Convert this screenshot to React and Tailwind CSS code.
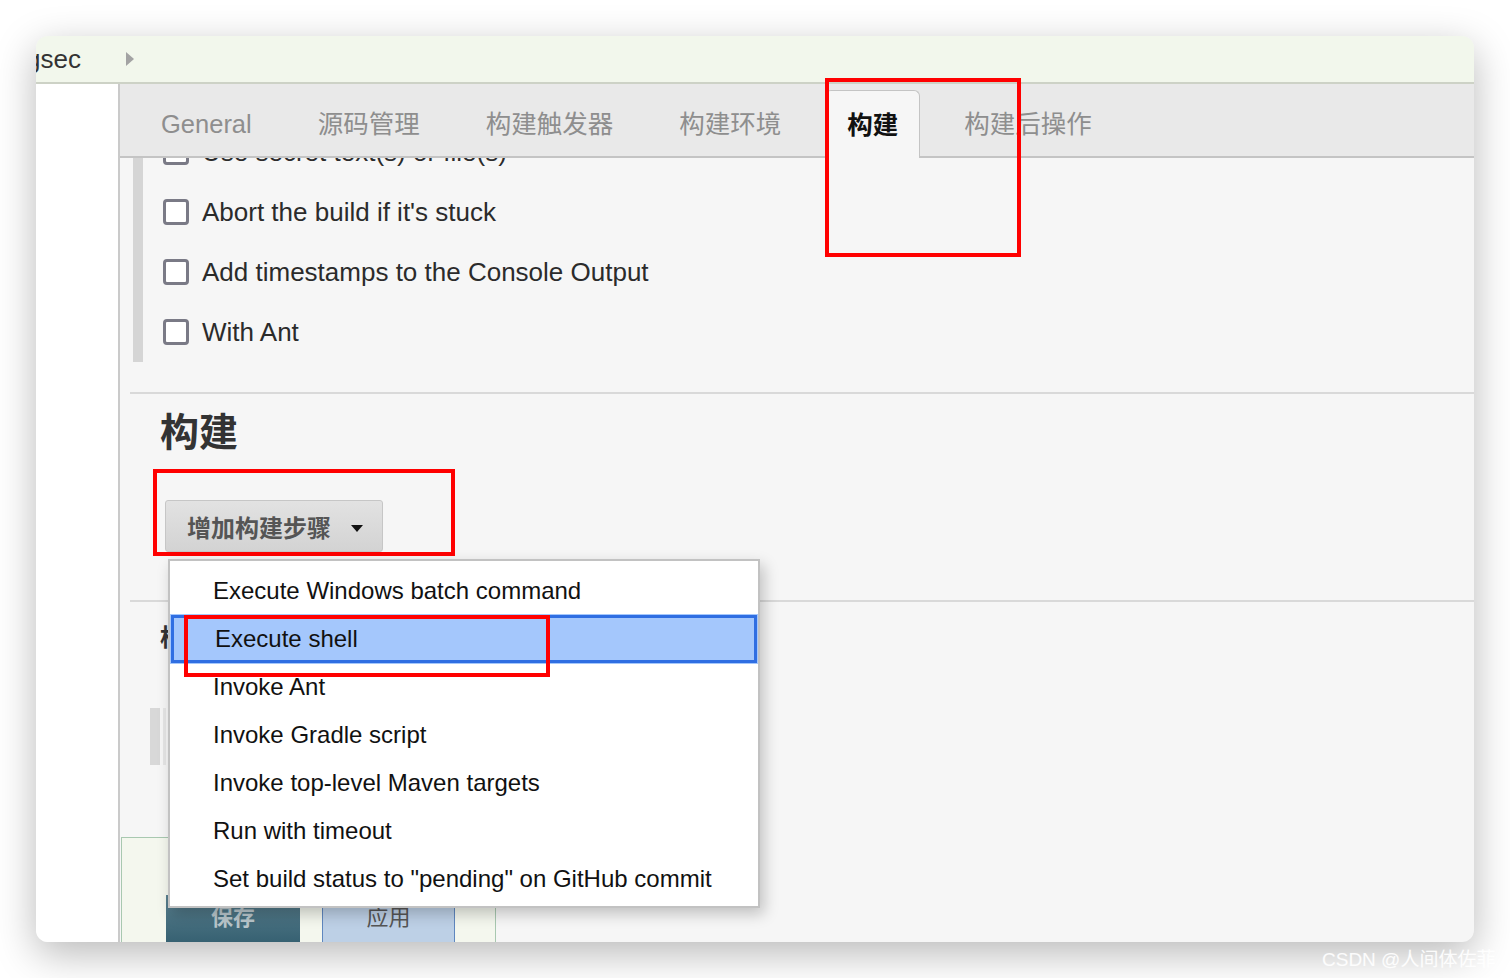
import React from 'react';

const tabs = ['General', '源码管理', '构建触发器', '构建环境', '构建', '构建后操作'];

const options = [
  'Use secret text(s) or file(s)',
  "Abort the build if it's stuck",
  'Add timestamps to the Console Output',
  'With Ant',
];

const steps = [
  'Execute Windows batch command',
  'Execute shell',
  'Invoke Ant',
  'Invoke Gradle script',
  'Invoke top-level Maven targets',
  'Run with timeout',
  'Set build status to "pending" on GitHub commit',
];

function Tab({ label, active }) {
  if (active) {
    return (
      <div className="relative mx-[11px] -mb-[2px] flex h-[68px] items-center rounded-t-[6px] border border-b-0 border-[#c4c4c4] bg-[#f6f6f6] px-[21px] pt-[2px] text-[25.5px] font-bold text-[#111]">
        {label}
        <div className="pointer-events-none absolute -left-px -top-[13px] h-[179px] w-[196px] border-4 border-[#f00]" />
      </div>
    );
  }
  return (
    <div className="mx-[11px] flex h-[66px] items-center px-[22px] pt-[3px] text-[25.5px] text-[#8e8e8e]">{label}</div>
  );
}

function Checkbox({ label }) {
  return (
    <div className="flex h-[60px] items-center gap-[13px]">
      <span className="h-[26px] w-[26px] rounded-[4px] border-[3px] border-[#7a7a86] bg-white" />
      <span className="text-[26px] text-[#2b2b2b]">{label}</span>
    </div>
  );
}

function StepMenu() {
  return (
    <div className="absolute left-[3px] top-[59px] z-10 w-[592px] border-2 border-[#c2c2c2] bg-white pb-[3px] pt-[6px] shadow-[4px_6px_14px_rgba(0,0,0,0.22)]">
      {steps.map((s) =>
        s === 'Execute shell' ? (
          <div key={s} className="relative mx-px flex h-[48px] items-center border-[3px] border-[#2f6ee2] bg-[#a4c7fc] pl-[41px] text-[24px] text-[#111] outline outline-1 outline-[#a4c7fc]">
            {s}
            <div className="pointer-events-none absolute left-[10px] -top-[3px] h-[62px] w-[366px] border-4 border-[#f00]" />
          </div>
        ) : (
          <div key={s} className="flex h-[48px] items-center pl-[43px] text-[24px] text-[#111]">{s}</div>
        )
      )}
    </div>
  );
}

export default function App() {
  return (
    <div className="relative h-[978px] w-[1510px] overflow-hidden bg-white font-['Liberation_Sans','Noto_Sans_CJK_SC',sans-serif]">
      <div className="p-[36px]">
        <div className="flex h-[906px] w-[1438px] flex-col overflow-hidden rounded-[12px] bg-[#f6f6f6] shadow-[0_12px_40px_rgba(0,0,0,0.28)]">
          {/* top crumb bar */}
          <div className="flex h-[48px] shrink-0 items-center border-b-2 border-[#cdd2c6] bg-[#f2f7ec]">
            <span className="-ml-[10px] text-[26px] text-[#333]">gsec</span>
            <span className="ml-[45px] h-0 w-0 border-y-[7px] border-l-[8px] border-y-transparent border-l-[#a3a3a3]" />
          </div>

          <div className="flex min-h-0 flex-1">
            <div className="w-[84px] shrink-0 border-r-2 border-[#cacaca] bg-white" />

            <div className="flex min-w-0 flex-1 flex-col">
              {/* tabs */}
              <div className="relative z-20 flex h-[74px] shrink-0 items-end border-b-2 border-[#c4c4c4] bg-[#e9e9e9] pl-[8px]">
                {tabs.map((t) => (
                  <Tab key={t} label={t} active={t === '构建'} />
                ))}
              </div>

              {/* form */}
              <div className="relative min-h-0 flex-1 overflow-hidden">
                <div className="-mt-[36px] ml-[13px] border-l-[10px] border-[#d5d5d5] pl-[20px]">
                  {options.map((o) => (
                    <Checkbox key={o} label={o} />
                  ))}
                </div>

                <div className="ml-[10px] mt-[30px] h-[2px] bg-[#d9d9d9]" />

                <h2 className="mt-[17px] pl-[40px] text-[39px] font-bold leading-[44px] text-[#333]">构建</h2>

                <div className="relative ml-[45px] mt-[45px] w-fit">
                  <button className="flex h-[52px] w-[218px] items-center gap-[20px] rounded-[3px] border border-[#c6c6c6] bg-gradient-to-b from-[#e2e2e2] to-[#d3d3d3] pl-[21px] pt-[5px] text-[24px] font-bold text-[#555]">
                    增加构建步骤
                    <span className="h-0 w-0 border-x-[6px] border-t-[7px] border-x-transparent border-t-[#111]" />
                  </button>
                  <div className="pointer-events-none absolute -left-[12px] -top-[31px] h-[87px] w-[302px] border-4 border-[#f00]" />
                  <StepMenu />
                </div>

                <div className="ml-[10px] mt-[48px] h-[2px] bg-[#d9d9d9]" />

                <h2 className="mt-[20px] pl-[40px] text-[24px] font-bold leading-[32px] text-[#333]">构建后操作</h2>

                <div className="ml-[30px] mt-[54px] flex h-[57px]">
                  <span className="w-[10px] bg-[#d8d8d8]" />
                  <span className="ml-[3px] w-[3px] bg-[#e6e6e6]" />
                </div>

                <div className="ml-px mt-[72px] flex h-[120px] w-[375px] items-start gap-[22px] border border-[#a8c8b0] bg-[#f4f7ee] pl-[44px] pt-[57px]">
                  <button className="h-[52px] w-[134px] bg-gradient-to-b from-[#5a808f] to-[#335e6f] pb-[8px] text-[22px] font-bold text-[#b9c6cb]">保存</button>
                  <button className="h-[52px] w-[133px] border-x border-[#5f87bf] bg-[#bdd0e6] pb-[8px] text-[22px] text-[#555]">应用</button>
                </div>
              </div>
            </div>
          </div>
        </div>
      </div>
      <div className="absolute left-[1322px] top-[946px] text-[19px] text-white/90">CSDN @人间体佐菲</div>
    </div>
  );
}
